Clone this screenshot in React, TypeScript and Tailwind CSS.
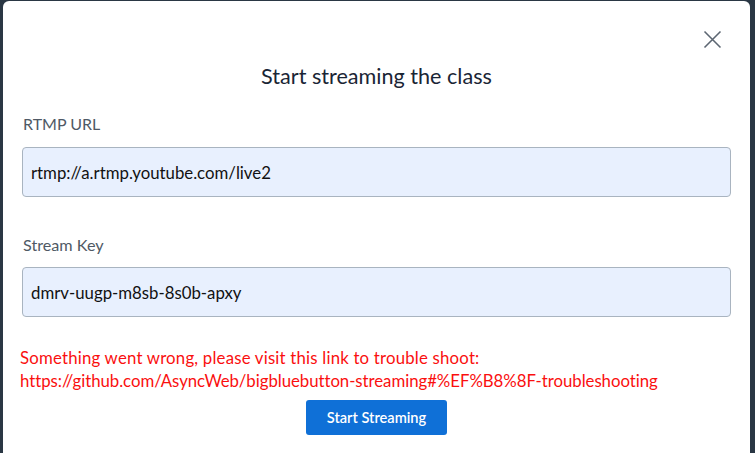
import React from 'react';

const font = { fontFamily: '"Lato", "Open Sans", sans-serif' };

export default function App() {
  return (
    <div className="w-[755px] h-[453px] bg-[#2a3744] pl-[3px] pt-[1px] overflow-hidden" style={font}>
      <div className="w-[747px] h-[452px] bg-white rounded-t-[6px] flex flex-col pt-[29px]">
        {/* Header */}
        <div className="flex justify-end pr-[28px] h-[19px]">
          <button className="w-[19px] h-[19px] flex items-center justify-center text-[#5c6672]" aria-label="Close">
            <svg width="19" height="19" viewBox="0 0 19 19" fill="none" stroke="currentColor" strokeWidth="1.6">
              <path d="M1.5 1.5l16 16M17.5 1.5l-16 16" />
            </svg>
          </button>
        </div>
        <h2 className="mt-[13px] text-center text-[21.6px] leading-[28px] text-[#1a2535]">Start streaming the class</h2>

        {/* Form */}
        <div className="px-[19px] flex flex-col">
          <label className="mt-[22px] pl-[1px] text-[16px] leading-[24px] text-[#4f5965]">RTMP URL</label>
          <input
            defaultValue="rtmp://a.rtmp.youtube.com/live2"
            className="mt-[11px] h-[50px] w-full bg-[#e8f0fe] border border-[#a9b4c0] rounded-[4px] px-[8px] text-[16.8px] text-[#111] outline-none"
            style={font}
          />
          <label className="mt-[36px] pl-[1px] text-[16.2px] leading-[24px] text-[#4f5965]">Stream Key</label>
          <input
            defaultValue="dmrv-uugp-m8sb-8s0b-apxy"
            className="mt-[10px] h-[50px] w-full bg-[#e8f0fe] border border-[#a9b4c0] rounded-[4px] px-[8px] text-[16.8px] text-[#111] outline-none"
            style={font}
          />
        </div>

        {/* Error */}
        <p className="mt-[29px] px-[17px] text-[16.8px] leading-[23px] text-[#fa0f0f]">
          <span className="block tracking-[0.2px]">Something went wrong, please visit this link to trouble shoot:</span>
          <span className="block tracking-[-0.04px]">https://github.com/AsyncWeb/bigbluebutton-streaming#%EF%B8%8F-troubleshooting</span>
        </p>

        <div className="mt-[8px] flex justify-center">
          <button className="w-[141px] h-[35px] bg-[#0f70d7] rounded-[3px] text-white text-[14.6px] font-semibold">
            Start Streaming
          </button>
        </div>
      </div>
    </div>
  );
}
